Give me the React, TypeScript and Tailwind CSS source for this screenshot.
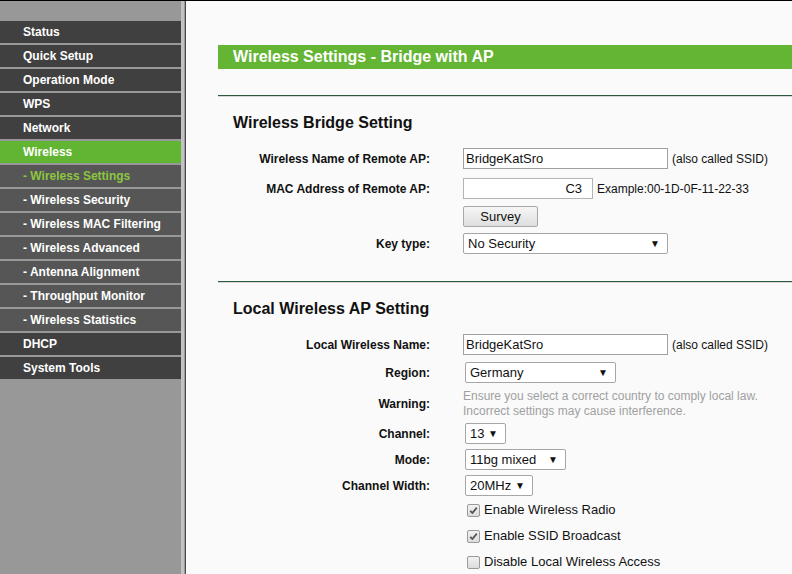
import React from 'react';

const menu = [
  { label: 'Status', kind: 'main' },
  { label: 'Quick Setup', kind: 'main' },
  { label: 'Operation Mode', kind: 'main' },
  { label: 'WPS', kind: 'main' },
  { label: 'Network', kind: 'main' },
  { label: 'Wireless', kind: 'active' },
  { label: '- Wireless Settings', kind: 'subActive' },
  { label: '- Wireless Security', kind: 'sub' },
  { label: '- Wireless MAC Filtering', kind: 'sub' },
  { label: '- Wireless Advanced', kind: 'sub' },
  { label: '- Antenna Alignment', kind: 'sub' },
  { label: '- Throughput Monitor', kind: 'sub' },
  { label: '- Wireless Statistics', kind: 'sub' },
  { label: 'DHCP', kind: 'main' },
  { label: 'System Tools', kind: 'main' },
];

function MenuItem({ label, kind }: { label: string; kind: string }) {
  const bg =
    kind === 'active' ? 'bg-[#62b532]' : kind === 'main' ? 'bg-[#404040]' : 'bg-[#565656]';
  const color = kind === 'subActive' ? 'text-[#8cc63f]' : 'text-white';
  return (
    <div className={`h-[22px] mb-[2px] flex items-center pl-[23px] text-[12px] font-bold whitespace-nowrap ${bg} ${color}`}>
      {label}
    </div>
  );
}

function Row({ label, children, className = '' }: { label: string; children: React.ReactNode; className?: string }) {
  return (
    <div className={`flex items-center h-[21px] ${className}`}>
      <div className="w-[212px] text-right text-[12px] font-bold text-[#111] whitespace-nowrap">{label}</div>
      <div className="ml-[33px] flex items-center h-full">{children}</div>
    </div>
  );
}

function Select({ value, width, className = '' }: { value: string; width: string; className?: string }) {
  return (
    <div className={`h-[21px] ${width} border border-[#a6a6a6] rounded-[2px] bg-white flex items-center justify-between pl-[4px] pr-[7px] text-[13px] text-[#111] ${className}`}>
      <span>{value}</span>
      <span className="text-[10px] leading-none">▼</span>
    </div>
  );
}

function Check({ checked, label, className = '' }: { checked: boolean; label: string; className?: string }) {
  return (
    <div className={`flex items-center h-[20px] pl-[245px] ${className}`}>
      <div className="ml-[4px] w-[13px] h-[13px] border border-[#9a9a9a] rounded-[2px] bg-gradient-to-b from-[#f2f2f2] to-[#dcdcdc] flex items-center justify-center">
        {checked && (
          <svg width="9" height="9" viewBox="0 0 9 9">
            <path d="M1.2 4.8 L3.4 7 L7.8 1.6" fill="none" stroke="#555" strokeWidth="1.8" />
          </svg>
        )}
      </div>
      <span className="ml-[4px] text-[13px] text-[#111] whitespace-nowrap">{label}</span>
    </div>
  );
}

function Divider({ className = '' }: { className?: string }) {
  return (
    <div className={className}>
      <div className="h-px bg-[#2c5c40]" />
      <div className="h-px bg-[#d6d6d6]" />
    </div>
  );
}

export default function App() {
  return (
    <div className="w-[792px] h-[574px] overflow-hidden border-t border-black flex font-['Liberation_Sans',Arial,sans-serif]">
      <div className="w-[181px] shrink-0 bg-[#989898] pt-[20px]">
        {menu.map((m) => (
          <MenuItem key={m.label} label={m.label} kind={m.kind} />
        ))}
      </div>
      <div className="w-[3px] shrink-0 bg-[#c2c2c2]" />
      <div className="w-px shrink-0 bg-[#9c9c9c]" />
      <div className="w-px shrink-0 bg-[#4a4a4a]" />

      <div className="flex-1 bg-[#fafafa] pl-[32px] overflow-hidden">
        <div className="mt-[44px] h-[24px] bg-[#64b534] flex items-center pl-[15px] text-[16px] font-bold text-white whitespace-nowrap">
          Wireless Settings - Bridge with AP
        </div>

        <Divider className="mt-[26px]" />
        <h2 className="mt-[16px] pl-[15px] h-[20px] leading-[20px] text-[16px] font-bold text-[#111]">Wireless Bridge Setting</h2>

        <Row label="Wireless Name of Remote AP:" className="mt-[15px]">
          <div className="w-[205px] h-[21px] border border-[#a0a0a0] bg-white pl-[2px] text-[13px] leading-[19px] text-[#111]">BridgeKatSro</div>
          <span className="ml-[4px] text-[12px] text-[#111] whitespace-nowrap">(also called SSID)</span>
        </Row>
        <Row label="MAC Address of Remote AP:" className="mt-[9px]">
          <div className="w-[130px] h-[21px] border border-[#b4b4b4] bg-white pr-[10px] text-right text-[13px] leading-[19px] text-[#111]">C3</div>
          <span className="ml-[4px] text-[12px] text-[#111] whitespace-nowrap">Example:00-1D-0F-11-22-33</span>
        </Row>
        <Row label="" className="mt-[7px]">
          <div className="w-[75px] h-[21px] border border-[#a8a8a8] rounded-[2px] bg-gradient-to-b from-[#f6f6f6] to-[#dedede] text-center text-[13px] leading-[19px] text-[#111]">
            Survey
          </div>
        </Row>
        <Row label="Key type:" className="mt-[6px]">
          <Select value="No Security" width="w-[205px]" />
        </Row>

        <Divider className="mt-[27px]" />
        <h2 className="mt-[16px] pl-[15px] h-[20px] leading-[20px] text-[16px] font-bold text-[#111]">Local Wireless AP Setting</h2>

        <Row label="Local Wireless Name:" className="mt-[15px]">
          <div className="w-[205px] h-[21px] border border-[#a0a0a0] bg-white pl-[2px] text-[13px] leading-[19px] text-[#111]">BridgeKatSro</div>
          <span className="ml-[4px] text-[12px] text-[#111] whitespace-nowrap">(also called SSID)</span>
        </Row>
        <Row label="Region:" className="mt-[7px]">
          <Select value="Germany" width="w-[151px]" className="ml-[2px]" />
        </Row>
        <div className="mt-[6px] flex items-center h-[30px]">
          <div className="w-[212px] text-right text-[12px] font-bold text-[#111]">Warning:</div>
          <div className="ml-[33px] text-[12px] leading-[15px] text-[#a0a0a0] whitespace-nowrap">
            Ensure you select a correct country to comply local law.
            <br />
            Incorrect settings may cause interference.
          </div>
        </div>
        <Row label="Channel:" className="mt-[4px]">
          <Select value="13" width="w-[41px]" className="ml-[2px]" />
        </Row>
        <Row label="Mode:" className="mt-[5px]">
          <Select value="11bg mixed" width="w-[101px]" className="ml-[2px]" />
        </Row>
        <Row label="Channel Width:" className="mt-[5px]">
          <Select value="20MHz" width="w-[68px]" className="ml-[2px]" />
        </Row>

        <Check checked label="Enable Wireless Radio" className="mt-[4px]" />
        <Check checked label="Enable SSID Broadcast" className="mt-[6px]" />
        <Check checked={false} label="Disable Local Wireless Access" className="mt-[6px]" />
      </div>
    </div>
  );
}
